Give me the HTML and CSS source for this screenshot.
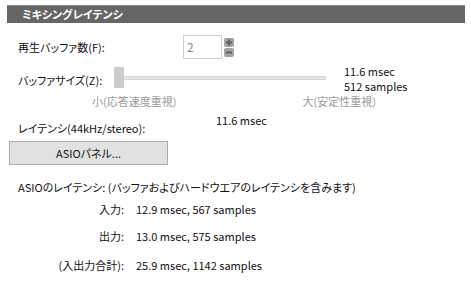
FILE: index.html
```html
<!DOCTYPE html>
<html lang="ja">
<head>
  <meta charset="UTF-8">
  <title>ミキシングレイテンシ</title>
  <link rel="stylesheet" href="styles.css">
</head>
<body>
  <div class="panel">
    <div class="header">ミキシングレイテンシ</div>

    <div class="content">
      <div class="row buffers">
        <span class="label">再生バッファ数(F):</span>
        <div class="input-box">2</div>
        <div class="spinner">
          <div class="spin-btn">
            <svg width="10" height="9" viewBox="0 0 10 9"><path d="M2 4.5h6M5 1.5v6" stroke="#5e5e5e" stroke-width="2"/></svg>
          </div>
          <div class="spin-btn">
            <svg width="10" height="9" viewBox="0 0 10 9"><path d="M2 4.5h6" stroke="#5e5e5e" stroke-width="2"/></svg>
          </div>
        </div>
      </div>

      <div class="row size">
        <span class="label size-label">バッファサイズ(Z):</span>
        <div class="slider">
          <div class="thumb"></div>
          <div class="track"></div>
        </div>
        <div class="readout">
          <div>11.6 msec</div>
          <div>512 samples</div>
        </div>
      </div>

      <div class="hints">
        <span>小(応答速度重視)</span>
        <span>大(安定性重視)</span>
      </div>

      <div class="row latency">
        <span class="label">レイテンシ(44kHz/stereo):</span>
        <span class="latency-value">11.6 msec</span>
      </div>

      <button class="asio-button" type="button">ASIOパネル...</button>

      <div class="asio">
        <div class="asio-title">ASIOのレイテンシ: (バッファおよびハードウエアのレイテンシを含みます)</div>
        <div class="asio-row"><span class="asio-key">入力:</span><span>12.9 msec, 567 samples</span></div>
        <div class="asio-row"><span class="asio-key">出力:</span><span>13.0 msec, 575 samples</span></div>
        <div class="asio-row total"><span class="asio-key">(入出力合計):</span><span>25.9 msec, 1142 samples</span></div>
      </div>
    </div>
  </div>
</body>
</html>
```

FILE: styles.css
```css
body {
  margin: 0;
  background-color: #fff;
  font-family: "Noto Sans CJK JP", "Noto Sans", sans-serif;
  font-size: 11px;
  font-feature-settings: "palt";
  color: #111;
}
.panel {
  padding: 5px 6px 0 7px;
}
.header {
  height: 17px;
  line-height: 17px;
  background-color: #666;
  border-top: 1px solid #8c8c8c;
  color: #fff;
  font-size: 11px;
  font-weight: bold;
  padding-left: 15px;
}
.content {
  padding-left: 11px;
}
.row {
  display: flex;
  align-items: center;
}
.buffers {
  margin-top: 12px;
  height: 24px;
}
.label {
  line-height: 16px;
}
.buffers .label {
  width: 165px;
}
.input-box {
  width: 34px;
  height: 22px;
  border: 1px solid #cfcfcf;
  color: #888;
  font-size: 12px;
  line-height: 22px;
  padding-left: 3px;
}
.spinner {
  display: flex;
  flex-direction: column;
  gap: 1px;
  margin-left: 2px;
}
.spin-btn {
  width: 10px;
  height: 9px;
  background-color: #a3a3a3;
  border-radius: 2px;
}
.spin-btn svg {
  display: block;
}
.size {
  margin-top: 8px;
  height: 21px;
}
.size-label {
  width: 96px;
  margin-top: 5px;
}
.slider {
  display: flex;
  align-items: center;
  width: 212px;
  height: 21px;
}
.thumb {
  width: 10px;
  height: 21px;
  background-color: #ccc;
}
.track {
  flex: 1;
  height: 2px;
  background-color: #e6e6e6;
  border: 1px solid #d6d6d6;
  border-left: none;
}
.readout {
  margin-left: 18px;
  line-height: 15px;
  margin-top: 2px;
}
.hints {
  display: flex;
  justify-content: space-between;
  width: 284px;
  margin: 0 0 0 74px;
  padding-top: 5px;
  color: #9a9a9a;
  line-height: 16px;
}
.latency {
  margin-top: 5px;
  height: 16px;
}
.latency .label {
  width: 198px;
  margin-top: 12px;
}
.latency-value {
  margin-top: -4px;
}
.asio-button {
  display: block;
  margin: 11px 0 0 -9px;
  width: 159px;
  height: 24px;
  background-color: #e1e1e1;
  border: 1px solid #adadad;
  font-family: inherit;
  font-size: 11px;
  font-feature-settings: "palt";
  color: #111;
  padding: 0;
}
.asio {
  margin-top: 14px;
}
.asio-title {
  line-height: 16px;
}
.asio-row {
  display: flex;
  line-height: 16px;
  margin-top: 6px;
}
.asio-row + .asio-row {
  margin-top: 11px;
}
.asio-row.total {
  margin-top: 13px;
}
.asio-key {
  width: 106px;
  text-align: right;
  padding-right: 12px;
}
```
